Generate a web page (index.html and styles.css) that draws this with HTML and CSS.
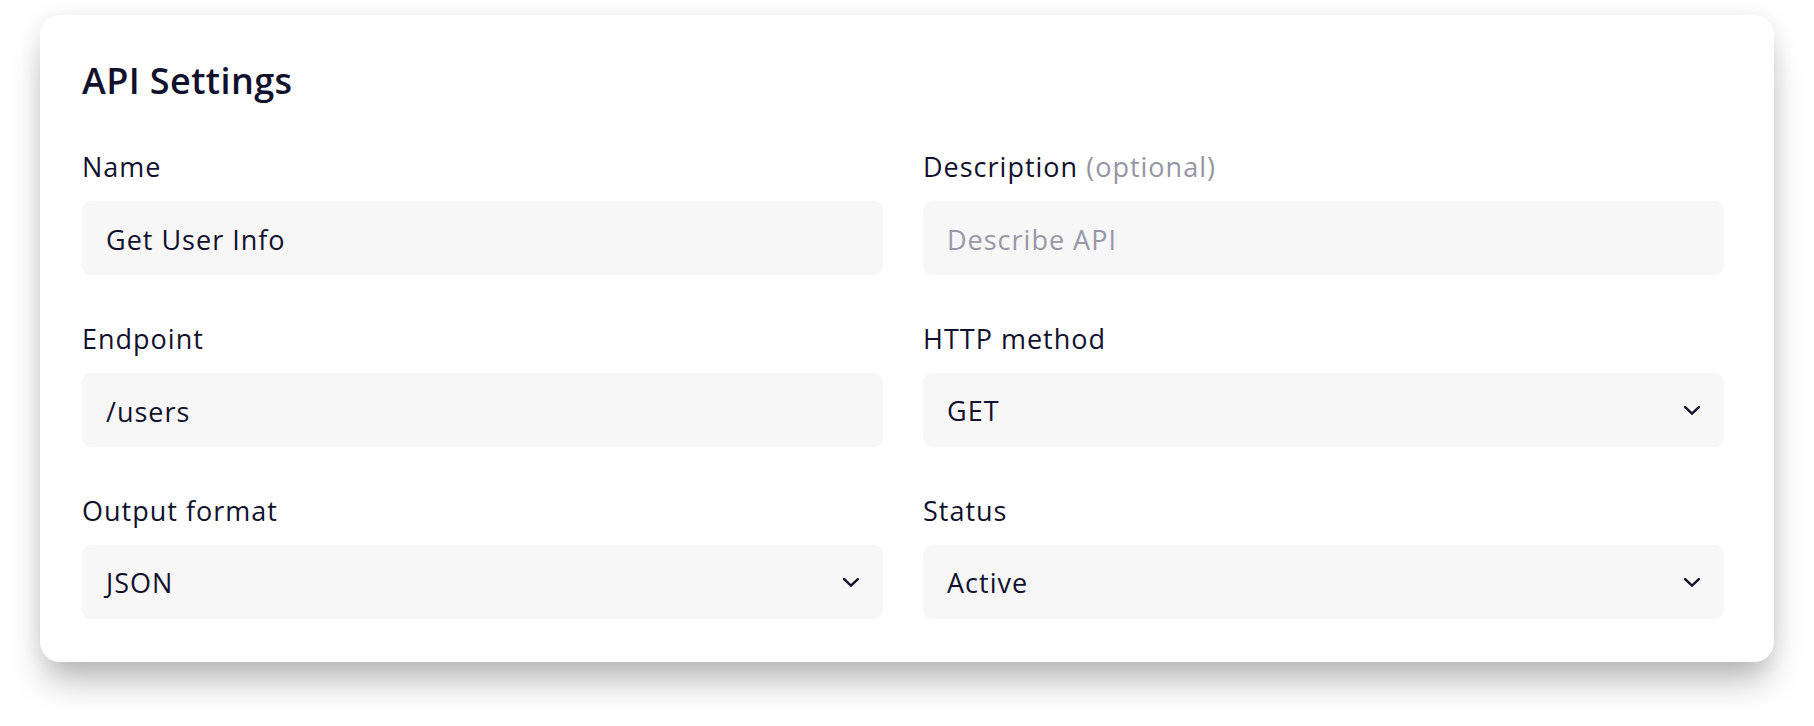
FILE: index.html
```html
<!DOCTYPE html>
<html lang="en">
<head>
<meta charset="utf-8">
<title>API Settings</title>
<link rel="stylesheet" href="styles.css">
</head>
<body>
<main class="page">
  <section class="card">
    <h1 class="title">API Settings</h1>
    <div class="grid">
      <div class="field">
        <label class="label" for="name">Name</label>
        <input class="control" id="name" type="text" value="Get User Info">
      </div>
      <div class="field">
        <label class="label" for="desc">Description <span class="muted">(optional)</span></label>
        <input class="control" id="desc" type="text" placeholder="Describe API">
      </div>
      <div class="field">
        <label class="label" for="endpoint">Endpoint</label>
        <input class="control" id="endpoint" type="text" value="/users">
      </div>
      <div class="field">
        <span class="label">HTTP method</span>
        <div class="control select">
          <span>GET</span>
          <svg class="chev" width="16" height="9" viewBox="0 0 16 9" aria-hidden="true"><path d="M1.2 1.2 L8 7.6 L14.8 1.2" fill="none" stroke="currentColor" stroke-width="2.4" stroke-linecap="square"/></svg>
        </div>
      </div>
      <div class="field">
        <span class="label">Output format</span>
        <div class="control select">
          <span>JSON</span>
          <svg class="chev" width="16" height="9" viewBox="0 0 16 9" aria-hidden="true"><path d="M1.2 1.2 L8 7.6 L14.8 1.2" fill="none" stroke="currentColor" stroke-width="2.4" stroke-linecap="square"/></svg>
        </div>
      </div>
      <div class="field">
        <span class="label">Status</span>
        <div class="control select">
          <span>Active</span>
          <svg class="chev" width="16" height="9" viewBox="0 0 16 9" aria-hidden="true"><path d="M1.2 1.2 L8 7.6 L14.8 1.2" fill="none" stroke="currentColor" stroke-width="2.4" stroke-linecap="square"/></svg>
        </div>
      </div>
    </div>
  </section>
</main>
</body>
</html>
```

FILE: styles.css
```css
* { box-sizing: border-box; }

html, body {
  margin: 0;
  background: #ffffff;
}

body {
  font-family: "Open Sans", "Noto Sans", "Liberation Sans", sans-serif;
  color: #11112d;
}

.page {
  padding: 15px 40px 80px 40px;
}

.card {
  background: #ffffff;
  border-radius: 20px;
  padding: 44px 50px 43px 42px;
  box-shadow: 0 24px 34px -6px rgba(0, 0, 0, 0.28), 0 0 22px rgba(0, 0, 0, 0.07);
}

.title {
  margin: 0 0 48px 0;
  font-size: 36px;
  line-height: 44px;
  font-weight: 600;
  letter-spacing: 0.4px;
  color: #11112d;
}

.grid {
  display: grid;
  grid-template-columns: 1fr 1fr;
  column-gap: 40px;
  row-gap: 48px;
}

.field {
  display: flex;
  flex-direction: column;
  gap: 18px;
}

.label {
  font-size: 27px;
  line-height: 32px;
  letter-spacing: 1px;
  color: #11112d;
}

.muted {
  color: #9595a3;
}

.control {
  height: 74px;
  width: 100%;
  border: none;
  outline: none;
  border-radius: 9px;
  background: #f7f7f8;
  padding: 2px 24px 0 24px;
  font-family: inherit;
  font-size: 27px;
  line-height: 32px;
  letter-spacing: 1px;
  color: #11112d;
  margin: 0;
}

.control::placeholder {
  color: #9797a6;
  opacity: 1;
}

.select {
  display: flex;
  align-items: center;
  justify-content: space-between;
}

.chev {
  color: #11112d;
  display: block;
  margin-top: -2px;
}
```
